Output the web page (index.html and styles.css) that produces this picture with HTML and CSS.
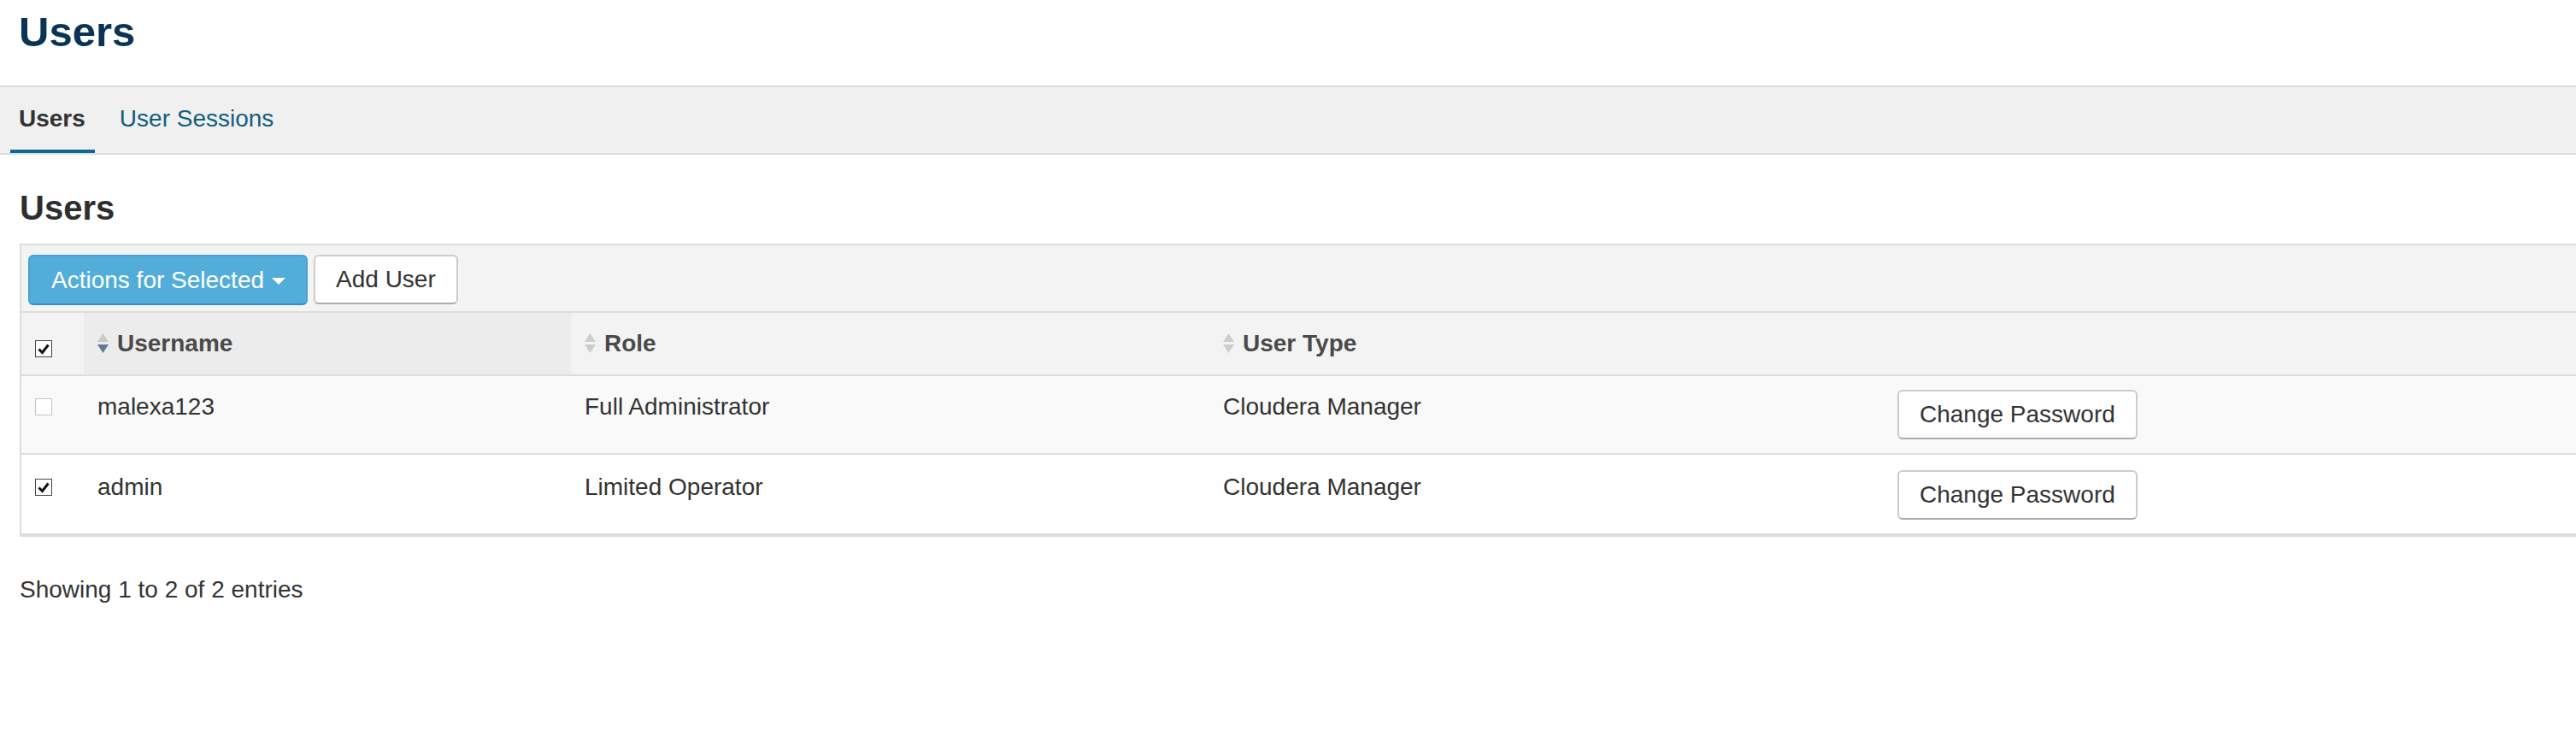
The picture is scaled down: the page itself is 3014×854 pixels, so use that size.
FILE: index.html
```html
<!DOCTYPE html>
<html lang="en">
<head>
<meta charset="utf-8">
<title>Users</title>
<link rel="stylesheet" href="styles.css">
</head>
<body>
<header class="page-header">
  <h1 class="page-title">Users</h1>
</header>
<nav class="tabs">
  <a class="tab active">Users</a>
  <a class="tab">User Sessions</a>
</nav>
<main class="content">
  <h2 class="section-title">Users</h2>
  <div class="panel">
    <div class="toolbar">
      <button class="btn btn-primary">Actions for Selected<span class="caret"></span></button>
      <button class="btn btn-default">Add User</button>
    </div>
    <table class="users-table">
      <colgroup>
        <col class="w-check">
        <col class="w-user">
        <col class="w-role">
        <col class="w-type">
        <col>
      </colgroup>
      <thead>
        <tr>
          <th class="cell-check"><span class="cb cb-head checked"><svg viewBox="0 0 20 20" width="20" height="20"><path d="M4.5 10.5 L8.5 14.5 L15.5 5.5" fill="none" stroke="#111" stroke-width="3"/></svg></span></th>
          <th class="sorted"><svg class="sort" viewBox="0 0 13 23" width="13" height="23"><path d="M6.5 0 L13 10 L0 10 Z" fill="#c9c9c9"/><path d="M0 13 L13 13 L6.5 23 Z" fill="#62799a"/></svg>Username</th>
          <th><svg class="sort" viewBox="0 0 13 23" width="13" height="23"><path d="M6.5 0 L13 10 L0 10 Z" fill="#cdcdcd"/><path d="M0 13 L13 13 L6.5 23 Z" fill="#cdcdcd"/></svg>Role</th>
          <th><svg class="sort" viewBox="0 0 13 23" width="13" height="23"><path d="M6.5 0 L13 10 L0 10 Z" fill="#cdcdcd"/><path d="M0 13 L13 13 L6.5 23 Z" fill="#cdcdcd"/></svg>User Type</th>
          <th></th>
        </tr>
      </thead>
      <tbody>
        <tr class="odd">
          <td class="cell-check"><span class="cb"></span></td>
          <td>malexa123</td>
          <td>Full Administrator</td>
          <td>Cloudera Manager</td>
          <td><button class="btn btn-default">Change Password</button></td>
        </tr>
        <tr class="last">
          <td class="cell-check"><span class="cb checked"><svg viewBox="0 0 20 20" width="20" height="20"><path d="M4.5 10.5 L8.5 14.5 L15.5 5.5" fill="none" stroke="#111" stroke-width="3"/></svg></span></td>
          <td>admin</td>
          <td>Limited Operator</td>
          <td>Cloudera Manager</td>
          <td><button class="btn btn-default">Change Password</button></td>
        </tr>
      </tbody>
    </table>
  </div>
  <div class="table-info">Showing 1 to 2 of 2 entries</div>
</main>
</body>
</html>
```

FILE: styles.css
```css
html, body {
  margin: 0;
  padding: 0;
  background: #ffffff;
  overflow: hidden;
}

body {
  font-family: "Liberation Sans", Arial, Helvetica, sans-serif;
  font-size: 28px;
  line-height: 40px;
  color: #333333;
  width: 3014px;
}

.page-header {
  height: 100px;
  box-sizing: border-box;
  padding: 10px 0 0 22px;
}

.page-title {
  margin: 0;
  font-size: 49px;
  line-height: 55px;
  font-weight: bold;
  color: #0a3457;
}

.tabs {
  display: flex;
  gap: 19px;
  padding-left: 12px;
  background: #f0f0f0;
  border-top: 2px solid #d9d9d9;
  border-bottom: 2px solid #dcdcdc;
  height: 77px;
}

.tab {
  display: block;
  box-sizing: border-box;
  height: 77px;
  padding: 17px 11px 0 10px;
  border-bottom: 4px solid transparent;
  color: #125d80;
  text-decoration: none;
}

.tab.active {
  color: #333333;
  font-weight: bold;
  border-bottom-color: #0b6c92;
}

.content {
  padding-left: 23px;
}

.section-title {
  margin: 40px 0 20px;
  font-size: 40px;
  line-height: 44px;
  font-weight: bold;
  color: #2e2e2e;
}

.panel {
  width: 3020px;
  box-sizing: border-box;
  border: 2px solid #dddddd;
  background: #f3f3f3;
}

.toolbar {
  display: flex;
  gap: 7px;
  padding: 11px 8px 7px;
  border-bottom: 2px solid #dddddd;
}

.btn {
  display: inline-block;
  box-sizing: border-box;
  height: 58px;
  margin: 0;
  padding: 7px 24px;
  font-family: inherit;
  font-size: 28px;
  line-height: 40px;
  border: 2px solid #cccccc;
  border-radius: 6px;
  cursor: pointer;
  white-space: nowrap;
}

.btn-primary {
  height: 59px;
  padding: 7.5px 24px 7.5px 25px;
  background: #52add9;
  border-color: #46a3d1;
  border-bottom-color: #3a8fbb;
  color: #ffffff;
}

.btn-default {
  background: #ffffff;
  border-color: #cccccc;
  border-bottom-color: #adadad;
  color: #333333;
}

.caret {
  display: inline-block;
  width: 0;
  height: 0;
  margin-left: 9px;
  vertical-align: 4px;
  border-top: 8px solid #ffffff;
  border-left: 8px solid transparent;
  border-right: 8px solid transparent;
}

.users-table {
  width: 100%;
  table-layout: fixed;
  border-collapse: collapse;
}

.w-check { width: 73px; }
.w-user { width: 570px; }
.w-role { width: 747px; }
.w-type { width: 789px; }

.users-table th,
.users-table td {
  padding: 16px;
  text-align: left;
  vertical-align: top;
  border-bottom: 2px solid #dddddd;
  white-space: nowrap;
}

.users-table th {
  font-weight: bold;
  color: #4a4a4a;
  background: #f3f3f3;
}

.users-table th.sorted {
  background: #ececec;
}

.users-table tbody tr {
  background: #ffffff;
}

.users-table tbody tr.odd {
  background: #f9f9f9;
}

.users-table tbody tr.last td {
  padding-top: 18px;
}

.users-table .btn {
  vertical-align: top;
}

.sort {
  display: inline-block;
  vertical-align: top;
  margin: 8px 10px 0 0;
}

.cb {
  display: inline-block;
  box-sizing: border-box;
  width: 20px;
  height: 20px;
  margin-top: 10px;
  vertical-align: top;
  background: #ffffff;
  border: 1.5px solid #c4c4c4;
  position: relative;
}

.cb.checked {
  border-color: #444444;
}

.cb.cb-head {
  margin-top: 16px;
}

.cb svg {
  position: absolute;
  left: -1.5px;
  top: -1.5px;
}

.table-info {
  margin-top: 42px;
  line-height: 40px;
  color: #333333;
}
```
